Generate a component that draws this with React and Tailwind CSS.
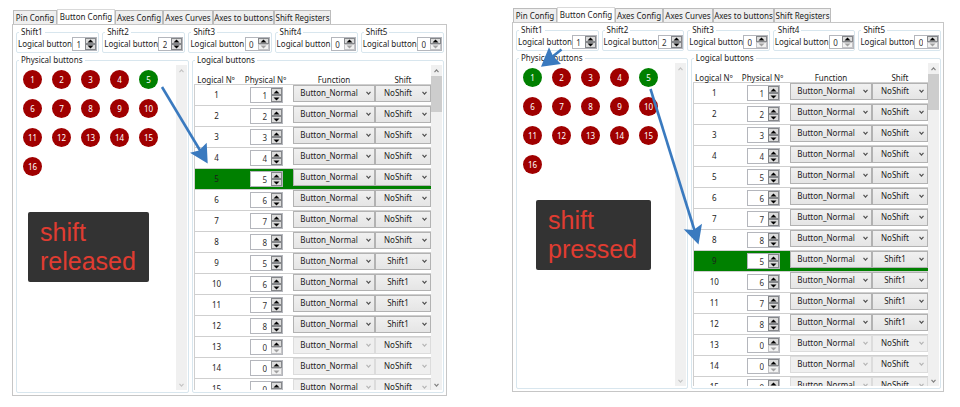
import React from "react";

const TABS = [
  { label: "Pin Config", width: "w-[44px]" },
  { label: "Button Config", width: "w-[58px]" },
  { label: "Axes Config", width: "w-[48px]" },
  { label: "Axes Curves", width: "w-[50px]" },
  { label: "Axes to buttons", width: "w-[61px]" },
  { label: "Shift Registers", width: "w-[57px]" },
];

const SHIFTS = [1, 2, 0, 0, 0];

const ROWS = [
  [1, "NoShift"],
  [2, "NoShift"],
  [3, "NoShift"],
  [4, "NoShift"],
  [5, "NoShift"],
  [6, "NoShift"],
  [7, "NoShift"],
  [8, "NoShift"],
  [5, "Shift1"],
  [6, "Shift1"],
  [7, "Shift1"],
  [8, "Shift1"],
  [0, "NoShift"],
  [0, "NoShift"],
  [0, "NoShift"],
];

function Triangle({ down, muted }) {
  return (
    <svg viewBox="0 0 7 4" className={"h-1 w-[7px] " + (muted ? "text-[#a0a0a0]" : "text-black")}>
      <path d={down ? "M0.5 0.5H6.5L3.5 3.5Z" : "M0.5 3.5H6.5L3.5 0.5Z"} fill="currentColor" />
    </svg>
  );
}

function Spinner({ id, label, value, className }) {
  const atMinimum = value === 0;
  return (
    <div className={"flex border border-[#b4b6bc] bg-white " + className}>
      <input
        id={id}
        type="text"
        aria-label={label}
        defaultValue={value}
        className="w-0 min-w-0 flex-1 bg-transparent pt-px pr-1 text-right text-[8px] leading-none text-[#333] outline-none"
      />
      <div className="flex w-[11px] flex-col">
        <button
          type="button"
          aria-label="Increase"
          className="flex min-h-0 flex-1 items-center justify-center border border-[#85878a] bg-[#dcdcdc]"
        >
          <Triangle />
        </button>
        <button
          type="button"
          aria-label="Decrease"
          disabled={atMinimum}
          className={
            "flex min-h-0 flex-1 items-center justify-center border " +
            (atMinimum ? "border-[#c4c4c6] bg-[#f2f2f2]" : "border-[#85878a] bg-[#dcdcdc]")
          }
        >
          <Triangle down muted={atMinimum} />
        </button>
      </div>
    </div>
  );
}

function Chevron({ up, className }) {
  return (
    <svg viewBox="0 0 5 4" fill="none" stroke="currentColor" strokeWidth="1.2" className={"h-1 w-[5px] " + className}>
      <path d={up ? "M0.5 3.2L2.5 0.9L4.5 3.2" : "M0.5 0.8L2.5 3.1L4.5 0.8"} />
    </svg>
  );
}

function Combo({ label, value, options, disabled }) {
  return (
    <div className="relative h-[17px]">
      <select
        aria-label={label}
        defaultValue={value}
        disabled={disabled}
        className={
          "block h-full w-full appearance-none border pr-[10px] pb-px text-center text-[8px] leading-[10px] text-[#1c1c1c] opacity-100 " +
          (disabled
            ? "border-[#dcdcdc] bg-[#efefef]"
            : "border-[#b2b2b2] bg-linear-to-b from-[#f0f0f0] to-[#e5e5e5]")
        }
      >
        {options.map((option) => (
          <option key={option}>{option}</option>
        ))}
      </select>
      <Chevron
        className={
          "pointer-events-none absolute top-[6px] right-1 " + (disabled ? "text-[#b5b5b5]" : "text-[#505050]")
        }
      />
    </div>
  );
}

function ScrollBar({ thumb }) {
  return (
    <div className="flex w-[11px] shrink-0 flex-col bg-[#f0f0f0]">
      <button type="button" aria-label="Scroll up" className="flex h-[11px] items-center justify-center">
        <Chevron up className={thumb ? "text-[#808080]" : "text-[#c4c4c4]"} />
      </button>
      <div className="flex-1">{thumb && <div className="h-9 bg-[#cdcdcd]" />}</div>
      <button type="button" aria-label="Scroll down" className="flex h-[11px] items-center justify-center">
        <Chevron className={thumb ? "text-[#808080]" : "text-[#c4c4c4]"} />
      </button>
    </div>
  );
}

function Group({ title, className = "", children }) {
  return (
    <fieldset className={"min-w-0 rounded-xs border border-[#d8e6ee] px-px pb-[2px] " + className}>
      <legend className="ml-px px-[2px] leading-[10px]">{title}</legend>
      {children}
    </fieldset>
  );
}

function ConfigPanel({ id, lit, activeRow, listHeight, className, children }) {
  return (
    <section className={"relative " + className}>
      <div role="tablist" className="flex h-[15px] items-end pl-px">
        {TABS.map((tab, index) => (
          <button
            key={tab.label}
            type="button"
            role="tab"
            aria-selected={index === 1}
            className={
              "border border-b-0 text-center leading-[10px] whitespace-nowrap " +
              tab.width +
              (index === 1 ? " h-[15px] border-[#d9d9d9] bg-white pb-px" : " h-[14px] border-[#bcbcbc] bg-[#efefef]")
            }
          >
            {tab.label}
          </button>
        ))}
      </div>

      <div className="border border-[#c6c6c6] pt-[2px] pr-[2px] pb-[2px] pl-[3px]">
        <div className="grid grid-cols-5 gap-[3px]">
          {SHIFTS.map((value, index) => (
            <Group key={index} title={"Shift" + (index + 1)} className="h-[26px]">
              <div className="flex items-center justify-between">
                <label htmlFor={id + "-shift-" + index} className="leading-[10px] whitespace-nowrap">
                  Logical button
                </label>
                <Spinner id={id + "-shift-" + index} value={value} className="h-[14px] w-[25px] shrink-0" />
              </div>
            </Group>
          ))}
        </div>

        <div className="mt-[2px] grid grid-cols-[173fr_252fr] gap-[3px]">
          <Group title="Physical buttons">
            <div className={"flex justify-between " + listHeight}>
              <ul className="grid grid-cols-[repeat(5,19px)] content-start gap-[10px] pt-[5px] pl-[5px]">
                {Array.from({ length: 16 }, (_, index) => index + 1).map((number) => (
                  <li
                    key={number}
                    className={
                      "flex size-[19px] items-center justify-center rounded-full text-white " +
                      (lit.includes(number) ? "bg-[#008000]" : "bg-[#a00000]")
                    }
                  >
                    {number}
                  </li>
                ))}
              </ul>
              <ScrollBar />
            </div>
          </Group>

          <Group title="Logical buttons">
            <div className={"flex overflow-hidden " + listHeight}>
              <div className="min-w-0 flex-1 overflow-hidden">
                <table className="w-full table-fixed border-separate border-spacing-0">
                  <colgroup>
                    <col />
                    <col className="w-[55px]" />
                    <col className="w-[82px]" />
                    <col className="w-[56px]" />
                  </colgroup>
                  <thead>
                    <tr className="h-[19px] align-bottom">
                      {["Logical Nº", "Physical Nº", "Function", "Shift"].map((heading) => (
                        <th key={heading} scope="col" className="p-0 leading-[8px] font-normal whitespace-nowrap">
                          {heading}
                        </th>
                      ))}
                    </tr>
                  </thead>
                  <tbody>
                    {ROWS.map(([physical, shift], index) => {
                      const number = index + 1;
                      const disabled = physical === 0;
                      const cell = "border-t border-[#cfcfcf] p-0 ";
                      return (
                        <tr key={number} className={"h-[21px] " + (number === activeRow ? "bg-[#008000]" : "bg-white")}>
                          <td className={cell + "border-l pb-px text-center leading-[10px]"}>{number}</td>
                          <td className={cell + "pl-3"}>
                            <Spinner
                              label={"Physical number " + number}
                              value={physical}
                              className="h-4 w-[33px]"
                            />
                          </td>
                          <td className={cell + "align-top"}>
                            <Combo
                              label={"Function " + number}
                              value="Button_Normal"
                              options={["Button_Normal"]}
                              disabled={disabled}
                            />
                          </td>
                          <td className={cell + "align-top"}>
                            <Combo
                              label={"Shift " + number}
                              value={shift}
                              options={["NoShift", "Shift1"]}
                              disabled={disabled}
                            />
                          </td>
                        </tr>
                      );
                    })}
                  </tbody>
                </table>
              </div>
              <ScrollBar thumb />
            </div>
          </Group>
        </div>
      </div>
      {children}
    </section>
  );
}

function Caption({ className, children }) {
  return (
    <p
      className={
        "absolute rounded-xs bg-[#333333] px-3 py-[6px] font-['Liberation_Sans',sans-serif] text-[25px] leading-[29px] text-[#e03c31] " +
        className
      }
    >
      {children}
    </p>
  );
}

function Arrows({ children }) {
  return (
    <svg
      className="pointer-events-none absolute top-0 left-0 h-full w-full overflow-visible"
      stroke="#3a7abf"
      strokeWidth="2.6"
      fill="#3a7abf"
    >
      {children}
    </svg>
  );
}

export default function App() {
  return (
    <main className="grid min-h-screen grid-cols-[435fr_432fr] items-start gap-[65px] bg-white pr-4 pl-3 font-['Noto_Sans',sans-serif] text-[8px] text-[#1c1c1c]">
      <ConfigPanel id="released" lit={[5]} activeRow={5} listHeight="h-[325px]" className="mt-[9px]">
        <Caption className="top-[203px] left-4 w-[121px]">
          shift
          <br />
          released
        </Caption>
        <Arrows>
          <path d="M150 78L189 143" />
          <path d="M195.7 154.5L178 143.7L187 141.5L194.7 133.7Z" stroke="none" />
        </Arrows>
      </ConfigPanel>

      <ConfigPanel id="pressed" lit={[1, 5]} activeRow={9} listHeight="h-[323px]" className="mt-[7px]">
        <Caption className="top-[193px] left-6 w-[115px]">
          shift
          <br />
          pressed
        </Caption>
        <Arrows>
          <path d="M49.5 42.5L40 50" />
          <path d="M29 59.7L37 40.3L41 49L49 57Z" stroke="none" />
          <path d="M138.5 82L183 225" />
          <path d="M186.5 237.5L171.7 222.3L181.5 223L190 216.7Z" stroke="none" />
        </Arrows>
      </ConfigPanel>
    </main>
  );
}
